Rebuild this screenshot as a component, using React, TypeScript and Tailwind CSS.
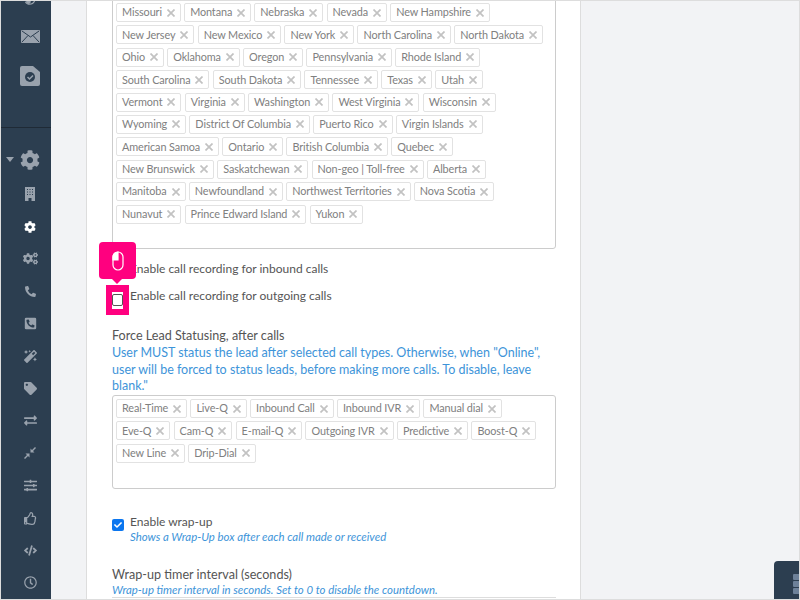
import { FaCog, FaCogs, FaPhoneAlt, FaPhoneSquareAlt, FaMagic, FaTag, FaExchangeAlt, FaSlidersH, FaRegThumbsUp, FaCode, FaRegClock, FaCheck } from 'react-icons/fa';

const stateRows = [
  ['Missouri', 'Montana', 'Nebraska', 'Nevada', 'New Hampshire'],
  ['New Jersey', 'New Mexico', 'New York', 'North Carolina', 'North Dakota'],
  ['Ohio', 'Oklahoma', 'Oregon', 'Pennsylvania', 'Rhode Island'],
  ['South Carolina', 'South Dakota', 'Tennessee', 'Texas', 'Utah'],
  ['Vermont', 'Virginia', 'Washington', 'West Virginia', 'Wisconsin'],
  ['Wyoming', 'District Of Columbia', 'Puerto Rico', 'Virgin Islands'],
  ['American Samoa', 'Ontario', 'British Columbia', 'Quebec'],
  ['New Brunswick', 'Saskatchewan', 'Non-geo | Toll-free', 'Alberta'],
  ['Manitoba', 'Newfoundland', 'Northwest Territories', 'Nova Scotia'],
  ['Nunavut', 'Prince Edward Island', 'Yukon'],
];

const callRows = [
  ['Real-Time', 'Live-Q', 'Inbound Call', 'Inbound IVR', 'Manual dial'],
  ['Eve-Q', 'Cam-Q', 'E-mail-Q', 'Outgoing IVR', 'Predictive', 'Boost-Q'],
  ['New Line', 'Drip-Dial'],
];

function Chip({ label }: { label: string }) {
  return (
    <span className="flex h-[19px] shrink-0 items-center gap-[5px] whitespace-nowrap rounded-[2px] border border-[#e2e2e2] bg-white px-[5px] text-[10.85px] tracking-[-0.1px] text-[#808080]">
      {label}
      <svg viewBox="0 0 8 8" className="h-[8px] w-[8px]" stroke="#c2c2c2" strokeWidth="1.7">
        <path d="M0.5 0.5l7 7M7.5 0.5l-7 7" />
      </svg>
    </span>
  );
}

function ChipRows({ rows }: { rows: string[][] }) {
  return (
    <div className="flex flex-col gap-[3.4px]">
      {rows.map((row, i) => (
        <div key={i} className="flex gap-[3.2px]">
          {row.map((label) => (
            <Chip key={label} label={label} />
          ))}
        </div>
      ))}
    </div>
  );
}

function Sidebar() {
  const small = 'h-[13px] w-[13px]';
  const rows = [
    <svg key="building" viewBox="0 0 10 14" className="h-[14px] w-[10px]" fill="currentColor">
      <path d="M0 0h10v14H0z" />
      <path d="M2 2h1v1H2zM4.500 2h1v1h-1zM7 2h1v1H7zM2 4.500h1v1H2zM4.500 4.500h1v1h-1zM7 4.500h1v1H7zM2 7h1v1H2zM4.500 7h1v1h-1zM7 7h1v1H7zM3.500 11h3v3h-3z" fill="#2c3e50" />
    </svg>,
    <FaCog key="cog" className="h-[12px] w-[12px] text-white" />,
    <FaCogs key="cogs" className="h-[15px] w-[15px]" />,
    <FaPhoneAlt key="phone" className="h-[11px] w-[11px]" />,
    <FaPhoneSquareAlt key="phone-square" className={small} />,
    <FaMagic key="magic" className={small} />,
    <FaTag key="tag" className={small} />,
    <FaExchangeAlt key="exchange" className={small} />,
    <svg key="compress" viewBox="0 0 12 12" className="h-[12px] w-[12px]" fill="currentColor">
      <path d="M11 0l1 1-3 3 1.500 1.500H6.500V1.500L8 3zM1 12l-1-1 3-3-1.500-1.500h4v4L4 9z" />
    </svg>,
    <FaSlidersH key="sliders" className={small} />,
    <FaRegThumbsUp key="thumbs" className={small} />,
    <FaCode key="code" className={small} />,
    <FaRegClock key="clock" className={small} />,
  ];
  return (
    <aside className="flex w-[50px] shrink-0 flex-col items-center bg-[#2c3e50] pl-[8px] text-[#99a2ad]">
      <svg viewBox="0 0 16 6" className="h-[6px] w-[16px]" fill="currentColor">
        <circle cx="6" cy="1" r="3" />
        <path d="M2 1c2 4 9 5 12-1" fill="none" stroke="currentColor" strokeWidth="1.500" />
      </svg>
      <svg viewBox="0 0 19 13" className="mt-[24px] h-[13px] w-[19px] shrink-0">
        <rect width="19" height="13" rx="1" fill="currentColor" />
        <path d="M1 1l8.500 6L18 1M1 12l6-6.500M18 12l-6-6.500" fill="none" stroke="#2c3e50" strokeWidth="1" />
      </svg>
      <svg viewBox="0 0 20 20" className="mt-[23px] h-[20px] w-[20px] shrink-0" fill="currentColor">
        <path d="M2 0h11l7 6v12a2 2 0 0 1-2 2H2a2 2 0 0 1-2-2V2a2 2 0 0 1 2-2z" />
        <circle cx="10" cy="11" r="5" fill="#2c3e50" />
        <path d="M7.500 11l2 2 3.500-3.500" stroke="#99a2ad" strokeWidth="1.500" fill="none" />
      </svg>
      <div className="-ml-[8px] mt-[41px] h-px w-[50px] shrink-0 bg-[#1f2a36]" />
      <div className="relative mt-[22px] flex w-[42px] shrink-0 justify-center">
        <span className="absolute -left-[3px] top-[7px] h-0 w-0 border-x-[4px] border-t-[5px] border-x-transparent border-t-[#99a2ad]" />
        <FaCog className="h-[20px] w-[20px]" />
      </div>
      <div className="mt-[8.3px] flex flex-col items-center">
        {rows.map((icon) => (
          <div key={icon.key} className="flex h-[32.4px] items-center justify-center">
            {icon}
          </div>
        ))}
      </div>
    </aside>
  );
}

export default function App() {
  return (
    <div className="relative flex h-[600px] w-[800px] overflow-hidden border border-[#ddd] bg-[#f2f3f5] font-['Lato','Noto_Sans',sans-serif] text-[12px] text-[#555]">
      <Sidebar />
      <main className="ml-[35px] w-[495px] shrink-0 border-x border-[#ddd] bg-white px-[25px]">
        <div className="-mt-[20px] h-[268px] w-[444px] rounded-[3px] border border-[#ccc] px-[3px] pt-[21px]">
          <ChipRows rows={stateRows} />
        </div>
        <label className="mt-[11px] flex h-[18px] items-center gap-[6px]">
          <span className="h-[12px] w-[12px]" />
          Enable call recording for inbound calls
        </label>
        <label className="mt-[9px] flex h-[18px] items-center gap-[6px]">
          <span className="h-[12px] w-[12px]" />
          Enable call recording for outgoing calls
        </label>
        <h3 className="mt-[22px] text-[12.6px] leading-[18px]">Force Lead Statusing, after calls</h3>
        <p className="w-[444px] text-[12.5px] leading-[16.5px] text-[#3d94d9]">
          User MUST status the lead after selected call types. Otherwise, when "Online", user will be forced to status leads, before making more calls. To disable, leave blank."
        </p>
        <div className="h-[94px] w-[444px] rounded-[3px] border border-[#ccc] px-[3px] pt-[3.6px]">
          <ChipRows rows={callRows} />
        </div>
        <div className="mt-[26px] flex gap-[6px]">
          <span className="mt-[4px] flex h-[12px] w-[12px] items-center justify-center rounded-[2px] bg-[#0b76ef] text-white">
            <FaCheck className="h-[8px] w-[8px]" />
          </span>
          <div>
            <div className="leading-[14px]">Enable wrap-up</div>
            <div className="text-[11.4px] italic leading-[16px] text-[#3d94d9]">Shows a Wrap-Up box after each call made or received</div>
          </div>
        </div>
        <h3 className="mt-[22px] text-[12.6px] leading-[16px]">Wrap-up timer interval (seconds)</h3>
        <p className="whitespace-nowrap text-[11.4px] italic leading-[14px] text-[#3d94d9]">Wrap-up timer interval in seconds. Set to 0 to disable the countdown.</p>
        <div className="h-px w-[444px] bg-[#ddd]" />
      </main>

      {/* tour pointer over the outgoing checkbox */}
      <div className="absolute left-[98px] top-[241px] flex h-[37px] w-[37px] items-center justify-center rounded-[4px] bg-[#ff007f] text-white">
        <svg viewBox="0 0 12 20" className="h-[20px] w-[12px]" fill="none" stroke="currentColor" strokeWidth="1.2">
          <rect x="1" y="1" width="10" height="18" rx="5" />
          <path d="M6 1a5 5 0 0 0-5 5v3h5z" fill="currentColor" />
        </svg>
        <span className="absolute -bottom-[5px] left-[13px] h-0 w-0 border-x-[5px] border-t-[5px] border-x-transparent border-t-[#ff007f]" />
      </div>
      <div className="absolute left-[105px] top-[284px] flex h-[30px] w-[23px] items-center justify-center bg-[#ff007f]">
        <div className="flex h-[17px] w-[11px] items-center justify-center bg-white">
          <span className="h-[12px] w-[11px] rounded-[2px] border border-[#555] bg-white" />
        </div>
      </div>

      {/* chat launcher in the corner */}
      <div className="absolute bottom-0 right-0 flex h-[38px] w-[25px] flex-col items-end gap-[1px] rounded-tl-[4px] bg-[#2c3e50] pt-[13px]">
        <span className="h-[6px] w-[6px] rounded-l-[1px] bg-[#6d8199]" />
        <span className="h-[6px] w-[6px] rounded-l-[1px] bg-[#6d8199]" />
        <span className="h-[6px] w-[6px] rounded-l-[1px] bg-[#6d8199]" />
      </div>
    </div>
  );
}
